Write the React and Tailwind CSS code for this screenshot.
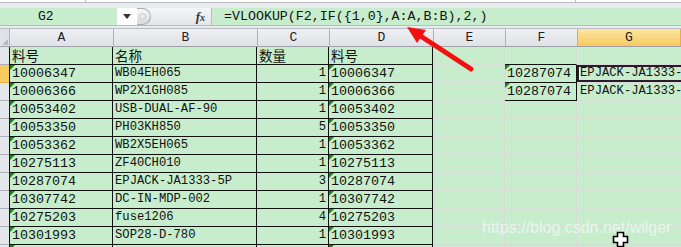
import React from "react";

const MONO = { fontFamily: "'Liberation Mono', 'Noto Sans CJK SC', monospace" };
const CJK = { fontFamily: "'Noto Sans CJK SC', 'Liberation Mono', sans-serif" };

const rows = [
  ["料号", "名称", "数量", "料号"],
  ["10006347", "WB04EH065", "1", "10006347"],
  ["10006366", "WP2X1GH085", "1", "10006366"],
  ["10053402", "USB-DUAL-AF-90", "1", "10053402"],
  ["10053350", "PH03KH850", "5", "10053350"],
  ["10053362", "WB2X5EH065", "1", "10053362"],
  ["10275113", "ZF40CH010", "1", "10275113"],
  ["10287074", "EPJACK-JA1333-5P", "3", "10287074"],
  ["10307742", "DC-IN-MDP-002", "1", "10307742"],
  ["10275203", "fuse1206", "4", "10275203"],
  ["10301993", "SOP28-D-780", "1", "10301993"],
  ["", "", "", ""],
];

const Tri = () => (
  <div className="absolute left-0 top-0 w-0 h-0 border-t-[5px] border-r-[5px] border-t-[#118a11] border-r-transparent" />
);

function HeaderCell({ label, w, sel }) {
  return (
    <div
      className={`${w} h-full flex items-center justify-center border-r text-[13px] text-[#222] ${
        sel
          ? "bg-gradient-to-b from-[#fde6a0] to-[#f6c95f] border-[#e2b04c]"
          : "bg-gradient-to-b from-[#eef0f2] to-[#dfe2e6] border-[#aeb2b8]"
      }`}
      style={MONO}
    >
      {label}
    </div>
  );
}

function Txt({ first, num, children }) {
  if (first) {
    return (
      <span className="text-[13.5px] leading-[17px] text-[#111]" style={CJK}>
        {children}
      </span>
    );
  }
  return (
    <span className={`${num ? "text-[13.33px]" : "text-[12.2px]"} leading-[15px] text-[#111]`} style={MONO}>
      {children}
    </span>
  );
}

export default function App() {
  return (
    <div className="relative w-[681px] h-[247px] overflow-hidden bg-[#c7edcc]" style={MONO}>
      {/* top strip */}
      <div className="h-[3px] flex bg-white border-b border-[#b9bdc3]">
        <div className="w-[86px] border-r border-[#b9bdc3]" />
        <div className="w-[490px] border-r border-[#b9bdc3]" />
      </div>
      <div className="h-[5px] bg-[#e9ecef]" />
      {/* formula bar */}
      <div className="h-[17px] flex bg-[#e9ecef]">
        <div className="w-[117px] bg-[#c7edcc] flex items-center pl-[38px] text-[13px] text-[#111]">
          G2
        </div>
        <div className="w-[20px] bg-white flex items-center justify-center">
          <svg width="8" height="5" viewBox="0 0 8 5">
            <path d="M0 0 L8 0 L4 5 Z" fill="#333" />
          </svg>
        </div>
        <div className="w-[75px] flex items-center bg-gradient-to-b from-[#f4f5f7] to-[#e3e6ea] border-r border-[#b9bdc3]">
          <div className="w-[14px] h-[17px] rounded-r-full bg-gradient-to-b from-[#f8f8f8] to-[#d6d9dd] border border-l-0 border-[#a9adb3] flex items-center">
            <div className="ml-[2px] w-[7px] h-[7px] rounded-full bg-[#e9eaec] border border-[#c5c8cc]" />
          </div>
          <div className="flex-1" />
          <span
            className="text-[13px] italic font-bold text-[#333] mr-[6px]"
            style={{ fontFamily: "'Liberation Serif', serif" }}
          >
            f<span className="text-[10px]">x</span>
          </span>
        </div>
        <div className="flex-1 bg-[#c7edcc] flex items-center pl-[12px] text-[13.3px] text-[#111] whitespace-nowrap">
          =VLOOKUP(F2,IF({"{"}1,0{"}"},A:A,B:B),2,)
        </div>
      </div>
      <div className="h-[4px] bg-[#e9ecef] border-t border-b border-[#b9bdc3]" />
      {/* column headers */}
      <div className="h-[18px] flex border-b border-[#9fa3a9]">
        <div className="w-[10px] h-full bg-[#dfe2e6] border-r border-[#aeb2b8] relative">
          <div className="absolute right-[1px] bottom-[1px] w-0 h-0 border-b-[6px] border-l-[6px] border-b-[#b5b9be] border-l-transparent" />
        </div>
        <HeaderCell label="A" w="w-[104px]" />
        <HeaderCell label="B" w="w-[144px]" />
        <HeaderCell label="C" w="w-[72px]" />
        <HeaderCell label="D" w="w-[104px]" />
        <HeaderCell label="E" w="w-[72px]" />
        <HeaderCell label="F" w="w-[72px]" />
        <HeaderCell label="G" w="flex-1" sel />
      </div>
      {/* rows */}
      {rows.map((r, i) => {
        const first = i === 0;
        const cellBase = first ? "items-center" : "items-end pb-[1px] overflow-hidden";
        return (
          <div key={i} className="h-[18px] flex">
            <div
              className={`w-[10px] h-full border-r border-b ${
                i === 1 ? "bg-[#f8cb61] border-[#e2b04c]" : "bg-[#e3e6ea] border-[#aeb2b8]"
              }`}
            />
            {/* A */}
            <div className={`w-[104px] h-full relative border-r border-b border-l -ml-[1px] border-[#111] flex pl-[2px] ${cellBase}`}>
              {!first && <Tri />}
              <Txt first={first} num>
                {r[0]}
              </Txt>
            </div>
            {/* B */}
            <div className={`w-[144px] h-full border-r border-b border-[#111] flex pl-[2px] ${cellBase}`}>
              <Txt first={first}>{r[1]}</Txt>
            </div>
            {/* C */}
            <div
              className={`w-[72px] h-full border-r border-b border-[#111] flex ${cellBase} ${
                first ? "justify-start pl-[2px]" : "justify-end pr-[2px]"
              }`}
            >
              <Txt first={first}>{r[2]}</Txt>
            </div>
            {/* D */}
            <div className={`w-[104px] h-full relative border-r border-b border-[#111] flex pl-[2px] ${cellBase}`}>
              {!first && <Tri />}
              <Txt first={first} num>
                {r[3]}
              </Txt>
            </div>
            {/* E */}
            <div className="w-[72px] h-full border-r border-b border-[#d6ddd8]" />
            {/* F */}
            <div
              className={`w-[72px] h-full relative border-r border-b flex items-end pl-[2px] pb-[1px] ${
                i === 1 || i === 2
                  ? "border-[#111]"
                  : i === 0
                  ? "border-[#111] border-r-[#d6ddd8]"
                  : "border-[#d6ddd8]"
              }`}
            >
              {(i === 1 || i === 2) && <Tri />}
              {(i === 1 || i === 2) && <Txt num>10287074</Txt>}
            </div>
            {/* G */}
            <div className="flex-1 h-full relative border-b border-[#d6ddd8] flex items-end pl-[3px] pb-[1px] overflow-hidden whitespace-nowrap">
              {(i === 1 || i === 2) && <Txt>EPJACK-JA1333-5P</Txt>}
              {i === 1 && (
                <div className="absolute -left-[1px] -top-[1px] -right-[4px] -bottom-[1px] border-[3px] border-[#2c1a2c]">
                  <div className="absolute inset-0 border border-l-white border-t-transparent border-r-transparent border-b-transparent" />
                </div>
              )}
            </div>
          </div>
        );
      })}

      {/* red arrow */}
      <svg className="absolute left-0 top-0 pointer-events-none" width="681" height="247">
        <line x1="471" y1="69" x2="419" y2="35" stroke="#f21010" strokeWidth="5" strokeLinecap="round" />
        <polygon points="407,27 426,30 417,43" fill="#f21010" />
      </svg>

      {/* watermark */}
      <div
        className="absolute left-[482px] top-[218px] text-[16px] leading-[20px] text-white/60 whitespace-nowrap pointer-events-none"
        style={{ fontFamily: "'Liberation Sans', Arial, sans-serif" }}
      >
        https://blog.csdn.net/wilger
      </div>

      {/* cursor */}
      <svg className="absolute left-[612px] top-[231px]" width="17" height="17" viewBox="0 0 17 17">
        <path
          d="M5.5 1.5 H11.5 V5.5 H15.5 V11.5 H11.5 V15.5 H5.5 V11.5 H1.5 V5.5 H5.5 Z"
          fill="#fff"
          stroke="#000"
          strokeWidth="1.6"
        />
      </svg>
    </div>
  );
}
